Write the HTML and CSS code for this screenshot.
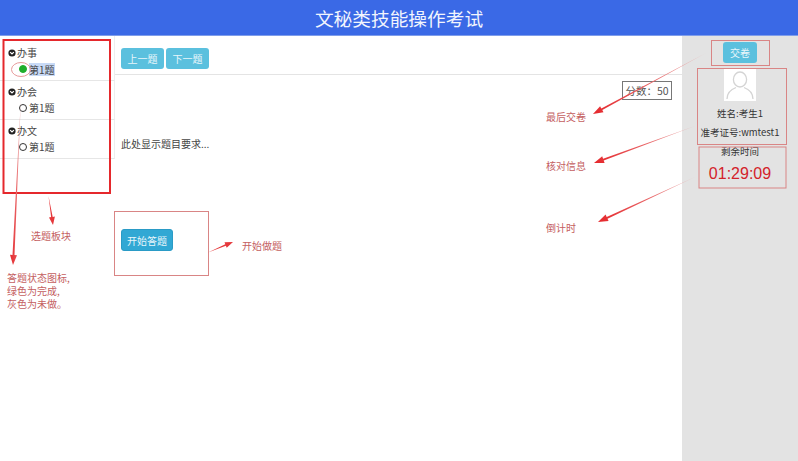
FILE: index.html
```html
<!DOCTYPE html>
<html lang="zh">
<head>
<meta charset="utf-8">
<title>文秘类技能操作考试</title>
<link rel="stylesheet" href="styles.css">
</head>
<body>
<div class="app">
  <header class="header">文秘类技能操作考试</header>
  <div class="content">
    <nav class="nav">
      <section class="group">
        <div class="group-title"><svg class="chev" viewBox="0 0 10 10"><circle cx="5" cy="5" r="4.5" fill="#222"/><path d="M2.7 3.9 5 6.2 7.3 3.9" fill="none" stroke="#fff" stroke-width="1.5"/></svg>办事</div>
        <div class="item"><span class="dot dot-done"></span><span class="selected">第1题</span></div>
      </section>
      <section class="group">
        <div class="group-title"><svg class="chev" viewBox="0 0 10 10"><circle cx="5" cy="5" r="4.5" fill="#222"/><path d="M2.7 3.9 5 6.2 7.3 3.9" fill="none" stroke="#fff" stroke-width="1.5"/></svg>办会</div>
        <div class="item"><span class="dot"></span><span>第1题</span></div>
      </section>
      <section class="group">
        <div class="group-title"><svg class="chev" viewBox="0 0 10 10"><circle cx="5" cy="5" r="4.5" fill="#222"/><path d="M2.7 3.9 5 6.2 7.3 3.9" fill="none" stroke="#fff" stroke-width="1.5"/></svg>办文</div>
        <div class="item"><span class="dot"></span><span>第1题</span></div>
      </section>
    </nav>
    <main class="main">
      <div class="toolbar">
        <button class="btn btn-info">上一题</button>
        <button class="btn btn-info">下一题</button>
      </div>
      <div class="score-row"><span class="score">分数：50</span></div>
      <p class="question">此处显示题目要求...</p>
      <button class="btn btn-start">开始答题</button>
    </main>
    <aside class="side">
      <button class="btn btn-info btn-submit">交卷</button>
      <svg class="avatar" viewBox="0 0 32 32"><rect width="32" height="32" fill="#fff"/><ellipse cx="16" cy="10.5" rx="6.6" ry="7.5" fill="none" stroke="#d4d4d4" stroke-width="1.3"/><path d="M3 30c0-7 5-10 9-11.500M29 30c0-7-5-10-9-11.500" fill="none" stroke="#d4d4d4" stroke-width="1.3"/></svg>
      <div class="info">姓名:考生1</div>
      <div class="info info-id">准考证号:wmtest1</div>
      <div class="remain">剩余时间</div>
      <div class="timer">01:29:09</div>
    </aside>
  </div>

  <svg class="overlay" viewBox="0 0 798 461">
    <defs>
      <linearGradient id="fade" x1="1" y1="0" x2="0" y2="1">
        <stop offset="0" stop-color="#e9b9b9"/>
        <stop offset="0.45" stop-color="#e9686a"/>
        <stop offset="1" stop-color="#e5282c"/>
      </linearGradient>
    </defs>
    <rect class="box-strong" x="3.500" y="40" width="106.500" height="153"/>
    <ellipse class="ring" cx="21" cy="69.500" rx="9.500" ry="7"/>
    <rect class="box" x="114.500" y="211.500" width="94" height="64"/>
    <rect class="box" x="711.500" y="40.500" width="58" height="25"/>
    <rect class="box" x="697.500" y="68.500" width="89" height="76"/>
    <rect class="box" x="699" y="147" width="87" height="41"/>
    <polygon class="arrow" points="21,97 14.500,255 17,255.200 13,265 10,254.800 12.500,255"/>
    <polygon class="arrow-solid" points="48.500,196 52.700,216.900 54.900,216.600 53,225 49,217.400 51.100,217.100"/>
    <polygon class="arrow-solid" points="208,252.500 225.900,245.700 226.700,247.800 233,242 224.500,242.200 225.300,244.300"/>
    <polygon class="arrow" points="706,53 602.300,110.100 603.500,112.300 593,114 600.100,106.200 601.300,108.400"/>
    <polygon class="arrow" points="695,126 603.700,160.500 604.600,162.900 594,163 602.200,156.300 603.100,158.700"/>
    <polygon class="arrow" points="695,177 607.500,218.700 608.600,221 598,222 605.600,214.600 606.700,216.900"/>
  </svg>

  <div class="note note-pick">选题板块</div>
  <div class="note note-status">答题状态图标,<br>绿色为完成,<br>灰色为未做。</div>
  <div class="note note-start">开始做题</div>
  <div class="note note-submit">最后交卷</div>
  <div class="note note-check">核对信息</div>
  <div class="note note-time">倒计时</div>
</div>
</body>
</html>
```

FILE: styles.css
```css
* { box-sizing: border-box; }
html, body { margin: 0; padding: 0; background: #fff; }
.app {
  position: relative;
  width: 798px;
  height: 461px;
  overflow: hidden;
  display: flex;
  flex-direction: column;
  font-family: "Noto Sans CJK SC", "Liberation Sans", sans-serif;
  font-size: 10px;
  color: #444;
}
.header {
  height: 36px;
  flex: none;
  background: #3a69e6;
  border-bottom: 1px solid #7f9dea;
  color: #f2f5fd;
  font-size: 18.700px;
  line-height: 35px;
  text-align: center;
}
.content { flex: 1; display: flex; min-height: 0; }

.nav { width: 115px; flex: none; }
.group {
  height: 39px;
  border-bottom: 1px solid #e6e6e6;
  border-right: 1px solid #eee;
  padding: 3px 0 0 8px;
}
.group:first-child { height: 45px; padding-top: 9px; }
.group-title { display: flex; align-items: center; gap: 1px; height: 16px; line-height: 16px; }
.chev { width: 8px; height: 8px; flex: none; }
.item { display: flex; align-items: center; height: 16px; line-height: 16px; padding-left: 11px; }
.dot {
  width: 8px;
  height: 8px;
  margin-right: 2px;
  border-radius: 50%;
  border: 1px solid #333;
  background: #fff;
  flex: none;
}
.dot-done { background: #1fae2c; border-color: #1fae2c; }
.selected { background: #c8daf6; line-height: 13px; }

.main { flex: 1; min-width: 0; display: flex; flex-direction: column; align-items: flex-start; }
.toolbar {
  width: 100%;
  height: 39px;
  flex: none;
  border-bottom: 1px solid #e4e4e4;
  padding: 12px 0 0 6px;
  display: flex;
  gap: 2px;
}
.btn {
  border: 0;
  padding: 0;
  border-radius: 3px;
  color: #e8f6fb;
  font-family: inherit;
  font-size: 10px;
  line-height: 21px;
  height: 21px;
  width: 43px;
}
.btn-info { background: #5bc0de; }
.score-row { width: 100%; display: flex; justify-content: flex-end; padding: 6px 10px 0 0; }
.score {
  width: 50px;
  height: 19px;
  border: 1px solid #777;
  color: #555;
  line-height: 17px;
  text-align: center;
  font-size: 10.500px;
  white-space: nowrap;
}
.question { margin: 36px 0 0 6px; line-height: 16px; font-size: 10px; }
.btn-start {
  background: #31a8d4;
  border: 1px solid #2a9bc6;
  width: 52px;
  height: 22px;
  margin: 77px 0 0 6px;
}

.side {
  width: 116px;
  flex: none;
  background: #e3e3e3;
  display: flex;
  flex-direction: column;
  align-items: center;
  color: #333;
}
.btn-submit { width: 34px; margin-top: 6px; flex: none; }
.avatar { width: 32px; height: 32px; margin-top: 6px; flex: none; }
.info { font-size: 9.500px; line-height: 14px; margin-top: 5px; white-space: nowrap; }
.info-id { font-size: 9.500px; }
.remain { font-size: 9.500px; line-height: 14px; margin-top: 5px; }
.timer { color: #d3222a; font-family: "Liberation Sans", sans-serif; font-size: 16px; line-height: 18px; margin-top: 7px; }

.overlay { position: absolute; left: 0; top: 0; width: 798px; height: 461px; pointer-events: none; }
.box { fill: none; stroke: #d98585; stroke-width: 1; }
.box-strong { fill: none; stroke: #e5282c; stroke-width: 2; }
.ring { fill: none; stroke: #e79a9a; stroke-width: 1; }
.arrow { fill: url(#fade); }
.arrow-solid { fill: #e5383b; }

.note { position: absolute; color: #c4605f; font-size: 10px; line-height: 13px; white-space: nowrap; }
.note-pick { left: 31px; top: 229px; }
.note-status { left: 7px; top: 271px; }
.note-start { left: 242px; top: 239px; }
.note-submit { left: 546px; top: 110px; }
.note-check { left: 546px; top: 159px; }
.note-time { left: 546px; top: 221px; }
```
